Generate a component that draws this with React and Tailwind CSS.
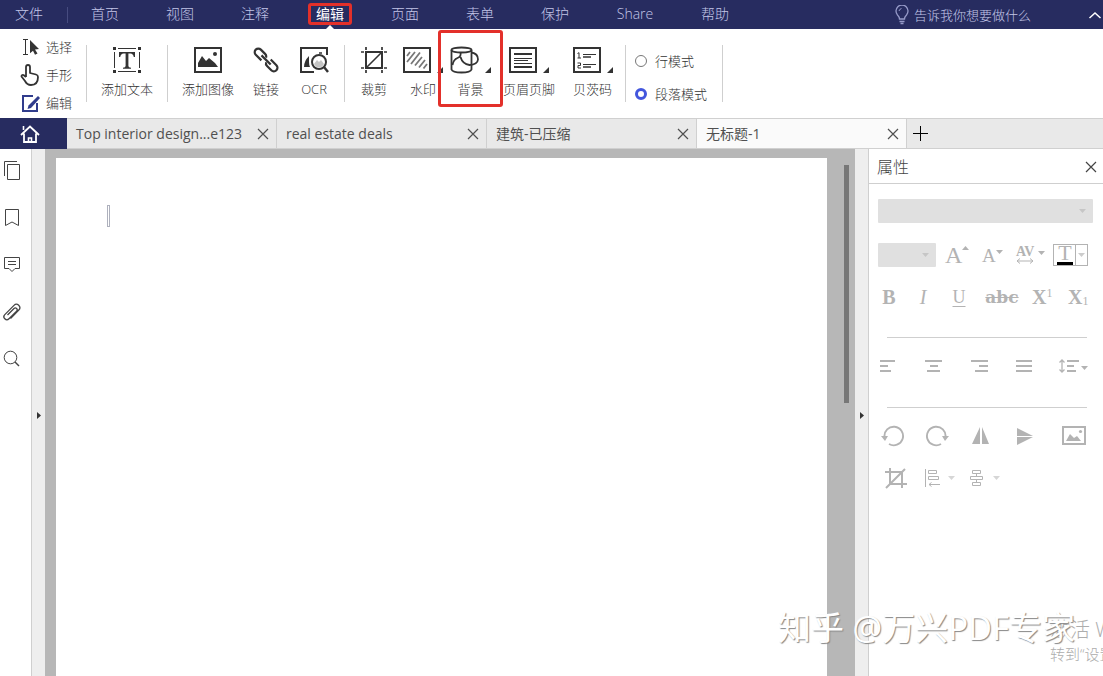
import React, { useState } from 'react';

const Svg = ({ w, h, children, className = '' }) => (
  <svg width={w} height={h} viewBox={`0 0 ${w} ${h}`} fill="none" stroke="currentColor" className={`shrink-0 ${className}`} aria-hidden="true">
    {children}
  </svg>
);

const CloseIcon = () => (
  <Svg w={12} h={12}><path d="M1 1l10 10M11 1L1 11" strokeWidth="1.200" /></Svg>
);

const Caret = ({ className = '' }) => (
  <Svg w={7} h={4} className={className}><path d="M0 0h7L3.500 4z" fill="currentColor" stroke="none" /></Svg>
);

const mountains = 'M4 21v-4l4-7 4 5 3-3 6 5 3 4z';

const toolIcons = {
  text: (
    <Svg w={28} h={28}>
      <path d="M0 1h3v3H0zM25 1h3v3h-3zM0 24h3v3H0zM25 24h3v3h-3z" fill="currentColor" stroke="none" />
      <path d="M5 2.500h18M5 25.500h18M1.500 6v16M26.500 6v16" strokeWidth="1" />
      <path d="M6 6h16v5h-1.200q-.6-3.500-3.400-3.500h-2V20q0 1.500 2.600 1.700v1h-8v-1q2.600-.2 2.600-1.700V7.500h-2q-2.800 0-3.400 3.500H6z" fill="currentColor" stroke="none" />
    </Svg>
  ),
  image: (
    <Svg w={28} h={28}>
      <rect x="1" y="2" width="26" height="24" strokeWidth="2" />
      <path d={mountains} fill="currentColor" stroke="none" />
      <circle cx="21" cy="8" r="2" fill="currentColor" stroke="none" />
    </Svg>
  ),
  link: (
    <Svg w={28} h={28}>
      <g transform="rotate(45 14 14)" strokeWidth="2.200">
        <path d="M11 17.500H3a3.600 3.600 0 0 1-3.600-3.600A3.600 3.600 0 0 1 3 10.300h6a3.600 3.600 0 0 1 3.300 2" />
        <path d="M17 10.300h8a3.600 3.600 0 0 1 3.600 3.600 3.600 3.600 0 0 1-3.600 3.600h-6a3.600 3.600 0 0 1-3.300-2" />
        <path d="M7.500 13.900h13" strokeWidth="2.300" />
      </g>
    </Svg>
  ),
  ocr: (
    <Svg w={29} h={28}>
      <path d="M27 9V2H1v24h13" strokeWidth="2" />
      <path d="M4 21q0-6 5-11v6q0 3 1 5z" fill="currentColor" stroke="none" />
      <circle cx="19" cy="16" r="7" strokeWidth="2" fill="#fff" />
      <path d="M14 18l3-4 2 2 2-2 3 4q-2 3.500-5 3.500t-5-3.500z" fill="#c4c4c4" stroke="none" />
      <path d="M24 21l4 5" strokeWidth="2.400" />
      <path d="M19 7h3" strokeWidth="1.500" />
    </Svg>
  ),
  crop: (
    <Svg w={28} h={28}>
      <rect x="6" y="6" width="16" height="16" strokeWidth="2" />
      <path d="M1 6h3M24 6h3M1 22h3M24 22h3M6 1v3M22 1v3M6 24v3M22 24v3" strokeWidth="1.700" />
      <path d="M6 22L22 6" strokeWidth="1.600" />
    </Svg>
  ),
  watermark: (
    <Svg w={28} h={28}>
      <rect x="1" y="2" width="26" height="24" strokeWidth="2" />
      <g stroke="#777" strokeWidth="1.800">
        <path d="M4 10l3-4M4 16l8-10M8 18L17 6.500M12 19.500L19 11M16 21.500L22 14M20.500 22.500L24 18" />
      </g>
    </Svg>
  ),
  background: (
    <Svg w={29} h={28}>
      <g strokeWidth="1.800">
        <ellipse cx="11.500" cy="4" rx="10" ry="2.500" />
        <path d="M1.500 4v19.500q1 3 10 3t10-3V4" />
        <path d="M10.500 6.500q1 4-3 5.500t-5 7" />
        <path d="M10.500 11q2 7 9 8 8-.5 8.500-5.500 0-6-6.500-7" />
      </g>
    </Svg>
  ),
  header: (
    <Svg w={28} h={28}>
      <rect x="1" y="2" width="26" height="24" strokeWidth="2" />
      <path d="M5 8h18M5 21h18" strokeWidth="2" />
      <path d="M5 12.500h18M5 14.500h14M5 17.500h18" strokeWidth="1" />
    </Svg>
  ),
  bates: (
    <Svg w={28} h={28}>
      <rect x="1" y="2" width="26" height="24" strokeWidth="2" />
      <path d="M10 8.500h13M10 18.500h13" strokeWidth="1" />
      <path d="M10 11h8M10 21h8" strokeWidth="1.600" />
      <path d="M4.500 7.500l1.500-.8V12M4.500 12h3.500M4.500 17h3v2.500H5V22h3" strokeWidth="1" />
    </Svg>
  ),
};

function Tool({ icon, label, width, menu, marked }) {
  return (
    <button type="button" className={`relative flex shrink-0 flex-col items-center gap-[7px] pt-[17px] ${width}`}>
      {marked && <span className="absolute -inset-x-[5px] top-px z-10 h-[77px] rounded-[3px] border-3 border-[#e3302a]" />}
      <span className="flex items-end gap-[6px]">
        {toolIcons[icon]}
        {menu && <Svg w={6} h={6} className="mb-px"><path d="M6 0v6H0z" fill="currentColor" stroke="none" /></Svg>}
      </span>
      <span className="text-[13px] leading-4 whitespace-nowrap">{label}</span>
    </button>
  );
}

const Divider = () => <span className="mt-4 h-[57px] w-px shrink-0 bg-[#cfcfcf]" />;

const menus = ['首页', '视图', '注释', '编辑', '页面', '表单', '保护', 'Share', '帮助'];

function MenuBar() {
  return (
    <nav className="flex h-[29px] shrink-0 items-stretch bg-[#272c60] text-[14px] leading-5 font-light text-[#c3c6e8]">
      <button type="button" className="w-[58px] shrink-0 pb-px">文件</button>
      <span className="ml-[9px] h-4 w-px shrink-0 self-center bg-[#474c80]" />
      {menus.map((m) => (
        <button key={m} type="button" className={`relative flex shrink-0 items-center justify-center pr-px pb-px ${m === 'Share' ? 'w-[85px]' : 'w-[75px]'}`}>
          {m === '编辑' ? (
            <>
              <span className="flex h-[22px] w-11 shrink-0 items-center justify-center rounded-[3px] border-3 border-[#e3302a] font-normal text-white">{m}</span>
              <Svg w={8} h={4} className="absolute bottom-0 text-white"><path d="M0 4l4-4 4 4z" fill="currentColor" stroke="none" /></Svg>
            </>
          ) : m}
        </button>
      ))}
      <div className="ml-auto flex items-center">
        <button type="button" className="flex items-center gap-1 pt-px text-[13px]">
          <Svg w={16} h={20} className="-mt-px">
            <path d="M5.500 14q0-2-2-4a6 6 0 1 1 9 0q-2 2-2 4zM5.500 16.500h5M6.500 18.500h3" stroke="#969ac8" strokeWidth="1.300" />
            <path d="M5 6q.5-2 2.500-2.500" stroke="#969ac8" />
          </Svg>
          告诉我你想要做什么
        </button>
        <button type="button" aria-label="收起" className="ml-14 text-white">
          <Svg w={16} h={12}><path d="M2.500 9L8 4l5.500 5" strokeWidth="1.500" /></Svg>
        </button>
      </div>
    </nav>
  );
}

function Ribbon() {
  const [mode, setMode] = useState('para');
  const mini = 'flex h-7 items-center gap-[6px]';
  return (
    <div className="flex h-[89px] shrink-0 items-start bg-white font-light text-[#333]">
      <div className="flex w-[86px] shrink-0 flex-col pt-1 pl-5 text-[13px] leading-4">
        <button type="button" className={mini}>
          <Svg w={20} h={20}>
            <path d="M3 2.500h5M5.500 2.500v15M3 17.500h5" strokeWidth="1" />
            <path d="M10 3l9 9-4 .5 2.500 4-2.500 1.200-2-4-3 2.500z" fill="currentColor" stroke="none" />
          </Svg>
          选择
        </button>
        <button type="button" className={mini}>
          <Svg w={20} h={24}>
            <path d="M6 14V4q0-2 2-2t2 2v6l6 1.500q2 .5 2 2.500 0 8-7 8-4 0-6-4l-3.500-4.500q0-2 2-1.500L6 14" strokeWidth="1.800" strokeLinejoin="round" />
          </Svg>
          手形
        </button>
        <button type="button" className={mini}>
          <Svg w={20} h={20} className="text-[#303c8c]">
            <path d="M13 3H3v15h14v-8" strokeWidth="2" />
            <path d="M18 3l2 2-9 10-3.500 1L8.500 12.500z" fill="currentColor" stroke="none" />
          </Svg>
          编辑
        </button>
      </div>
      <Divider />
      <Tool icon="text" label="添加文本" width="w-20" />
      <Divider />
      <Tool icon="image" label="添加图像" width="w-20" />
      <Tool icon="link" label="链接" width="w-9" />
      <Tool icon="ocr" label="OCR" width="w-[60px]" />
      <Divider />
      <Tool icon="crop" label="裁剪" width="w-[58px]" />
      <Tool icon="watermark" label="水印" width="w-10" menu />
      <Tool icon="background" label="背景" width="w-[55px]" menu marked />
      <Tool icon="header" label="页眉页脚" width="w-[62px]" menu />
      <Tool icon="bates" label="贝茨码" width="w-[65px]" menu />
      <Divider />
      <div className="flex w-24 shrink-0 flex-col gap-[13px] pt-[22px] pl-[9px] text-[13px] leading-5">
        {[['line', '行模式'], ['para', '段落模式']].map(([id, label]) => (
          <label key={id} className="flex items-center gap-2">
            <input
              type="radio"
              name="mode"
              checked={mode === id}
              onChange={() => setMode(id)}
              className="size-3 appearance-none rounded-full border border-[#777] checked:border-3 checked:border-[#4356dd]"
            />
            {label}
          </label>
        ))}
      </div>
      <Divider />
    </div>
  );
}

const tabs = ['Top interior design...e123', 'real estate deals', '建筑-已压缩', '无标题-1'];

function TabBar() {
  return (
    <div className="flex h-[31px] shrink-0 bg-[#e9e9e9] text-[#505050]">
      <button type="button" aria-label="主页" className="flex w-[67px] shrink-0 items-center justify-center bg-[#272c60] pr-2 text-white">
        <Svg w={20} h={20}>
          <path d="M1 11L10 2.500l9 8.500M4 9.500V18h12V9.500" strokeWidth="1.800" />
          <path d="M8.500 18v-4h3v4M3.500 2v4" strokeWidth="1.600" />
        </Svg>
      </button>
      <div className="flex flex-1 border-y border-[#d0d0d0]">
        {tabs.map((t, i) => (
          <div key={t} className={`flex w-[210px] items-center justify-between border-r border-[#d0d0d0] pr-[7px] pl-[9px] ${i === 3 ? 'bg-[#fafafa]' : ''}`}>
            <button type="button" className="text-[14px] leading-5 whitespace-nowrap">{t}</button>
            <button type="button" aria-label="关闭标签"><CloseIcon /></button>
          </div>
        ))}
        <button type="button" aria-label="新建标签" className="pl-[6px] text-black">
          <Svg w={15} h={15}><path d="M7.500 0v15M0 7.500h15" strokeWidth="1" /></Svg>
        </button>
      </div>
    </div>
  );
}

function SideRail() {
  return (
    <aside className="flex w-8 shrink-0 flex-col items-start gap-[27px] border-r border-[#cfcfcf] bg-white pt-3 pl-[2px] text-[#444]">
      <button type="button" aria-label="页面缩略图">
        <Svg w={20} h={20}><path d="M2.500 15V.5H15M5.500 3.500h12v15h-12z" strokeWidth="1" /></Svg>
      </button>
      <button type="button" aria-label="书签">
        <Svg w={20} h={20}><path d="M3.500 1.500h13v16L10 14l-6.500 3.500z" strokeWidth="1" /></Svg>
      </button>
      <button type="button" aria-label="注释">
        <Svg w={20} h={20}><path d="M2.500 2.500h15v11H13l-3 3-3-3H2.500zM6 6.500h8M6 9.500h8" strokeWidth="1" /></Svg>
      </button>
      <button type="button" aria-label="附件">
        <Svg w={20} h={20}>
          <path d="M5.500 12l6.500-6.500a1.800 1.800 0 0 1 2.600 2.600L7 15.800a2.900 2.900 0 0 1-4.200-4.200L12 2.400a3.300 3.300 0 0 1 4.800 4.600L8.500 15.500" strokeWidth="1.300" transform="translate(0 1)" />
        </Svg>
      </button>
      <button type="button" aria-label="搜索">
        <Svg w={20} h={20}><circle cx="8.500" cy="8.500" r="6.300" strokeWidth="1" /><path d="M13 13l4 4" strokeWidth="1.500" /></Svg>
      </button>
    </aside>
  );
}

const Grip = ({ label }) => (
  <button type="button" aria-label={label} className="flex w-[13px] shrink-0 items-center justify-center bg-[#eee] pt-[6px] text-[#333]">
    <Svg w={4} h={7}><path d="M0 0l4 3.500L0 7z" fill="currentColor" stroke="none" /></Svg>
  </button>
);

const serif = "font-['Liberation_Serif',serif]";

function Select({ label, className }) {
  return (
    <div className={`relative h-6 ${className}`}>
      <select disabled aria-label={label} className="h-6 w-full appearance-none rounded-[1px] bg-[#e0e0e0]" />
      <Caret className="absolute top-[10px] right-[7px] text-[#c6c6c6]" />
    </div>
  );
}

function AlignIcon({ lines }) {
  return <Svg w={18} h={14}><path d={lines} strokeWidth="2" /></Svg>;
}

function Properties() {
  return (
    <aside className="flex w-[235px] shrink-0 flex-col border-l border-[#cfcfcf] bg-white text-[#b3b3b3]">
      <header className="flex h-[35px] items-center justify-between border-b border-[#cfcfcf] pt-px pr-[6px] pl-2 text-[#444]">
        <h2 className="text-[16px] leading-6 font-light">属性</h2>
        <button type="button" aria-label="关闭属性"><CloseIcon /></button>
      </header>
      <div className="flex flex-col pt-[15px] pl-[9px]">
        <Select label="字体" className="mr-[10px]" />
        <div className="mt-5 flex h-6 items-center">
          <Select label="字号" className="w-[58px]" />
          <button type="button" aria-label="增大字号" className={`ml-[9px] flex w-[26px] items-start text-[24px] leading-6 ${serif}`}>
            A<Caret className="mt-[3px] rotate-180" />
          </button>
          <button type="button" aria-label="减小字号" className={`ml-[11px] flex w-5 items-start pt-px text-[19px] leading-5 ${serif}`}>
            A<Caret className="mt-1" />
          </button>
          <button type="button" aria-label="字符间距" className={`ml-[14px] flex items-center gap-1 text-[14px] leading-3 ${serif} font-bold`}>
            <span className="flex flex-col items-center">
              AV
              <Svg w={18} h={6}><path d="M1 3h16M4 .5L1 3l3 2.500M14 .5L17 3l-3 2.500" /></Svg>
            </span>
            <Caret className="-mt-1" />
          </button>
          <button type="button" aria-label="文字颜色" className="ml-2 flex h-[22px] w-[35px] border border-[#b3b3b3]">
            <span className={`flex w-[22px] flex-col items-center gap-px border-r border-[#b3b3b3] text-[22px] leading-4 ${serif}`}>
              T<span className="h-[3px] w-4 bg-black" />
            </span>
            <span className="flex flex-1 items-center justify-center self-stretch text-[#ccc]"><Caret /></span>
          </button>
        </div>
        <div className={`mt-[18px] flex h-6 items-center text-[20px] leading-6 ${serif}`}>
          <button type="button" aria-label="加粗" className="w-[22px] font-bold">B</button>
          <button type="button" aria-label="斜体" className="w-[46px] italic">I</button>
          <button type="button" aria-label="下划线" className="w-[26px] text-[18px] underline underline-offset-3">U</button>
          <button type="button" aria-label="删除线" className="w-[60px] font-['DejaVu_Serif',serif] text-[17px] font-bold line-through">abc</button>
          <button type="button" aria-label="上标" className="flex w-[36px] font-bold">X<span className="text-[12px] leading-4 font-normal">1</span></button>
          <button type="button" aria-label="下标" className="flex font-bold">X<span className="self-end text-[12px] leading-4 font-normal">1</span></button>
        </div>
        <hr className="mt-7 mr-4 ml-[9px] border-[#cfcfcf]" />
        <div className="mt-5 flex h-4 items-center gap-7">
          <button type="button" aria-label="左对齐"><AlignIcon lines="M2 2h15M2 7h8M2 12h11" /></button>
          <button type="button" aria-label="居中对齐"><AlignIcon lines="M1 2h17M6 7h8M3 12h13" /></button>
          <button type="button" aria-label="右对齐"><AlignIcon lines="M1 2h17M9 7h9M5 12h13" /></button>
          <button type="button" aria-label="两端对齐"><AlignIcon lines="M0 2h16M0 7h16M0 12h16" /></button>
          <button type="button" aria-label="行距" className="-ml-1">
            <Svg w={30} h={16}>
              <path d="M4 2v12M1.500 4.500L4 2l2.500 2.500M1.500 11.500L4 14l2.500-2.500" strokeWidth="1.300" />
              <path d="M9 3h12M9 8h7M9 13h9" strokeWidth="1.800" />
              <path d="M23 8h7l-3.500 4z" fill="currentColor" stroke="none" />
            </Svg>
          </button>
        </div>
        <hr className="mt-[33px] mr-4 ml-[9px] border-[#cfcfcf]" />
        <div className="mt-4 flex h-6 items-center gap-5 pl-[3px]">
          <button type="button" aria-label="向左旋转">
            <Svg w={24} h={24}><path d="M3.500 13A9.300 9.300 0 1 1 8 20" strokeWidth="1.900" /><path d="M0 12h7l-3 5z" fill="currentColor" stroke="none" /></Svg>
          </button>
          <button type="button" aria-label="向右旋转">
            <Svg w={24} h={24}><path d="M20.500 13A9.300 9.300 0 1 0 16 20" strokeWidth="1.900" /><path d="M17 12h7l-4 5z" fill="currentColor" stroke="none" /></Svg>
          </button>
          <button type="button" aria-label="水平翻转">
            <Svg w={24} h={24}><path d="M11 3v17H3zM13 3v17h7z" fill="currentColor" stroke="none" /></Svg>
          </button>
          <button type="button" aria-label="垂直翻转">
            <Svg w={24} h={24}><path d="M4 4l16 8H4zM4 13h16L4 21z" fill="currentColor" stroke="none" /></Svg>
          </button>
          <button type="button" aria-label="替换图像" className="pl-[5px]">
            <Svg w={24} h={24}>
              <rect x="1" y="3" width="22" height="17" strokeWidth="2" />
              <path d="M4 17l4-7 4 4 3-2 4 5z" fill="currentColor" stroke="none" />
              <circle cx="18.500" cy="7.500" r="1.600" fill="currentColor" stroke="none" />
            </Svg>
          </button>
        </div>
        <div className="mt-[18px] flex h-6 items-center pl-[6px]">
          <button type="button" aria-label="裁剪图像">
            <Svg w={24} h={24}><path d="M1 6h17v16M6 2v16h17M2 22L21 3" strokeWidth="2" /></Svg>
          </button>
          <button type="button" aria-label="对齐对象" className="ml-4 flex items-center gap-[7px]">
            <Svg w={17} h={20}><path d="M1.500 1v18M4.500 2.500h8v3h-8zM4.500 8.500h10v3h-10zM5 16.500h11M7.500 14.500l-2.500 2 2.500 2" strokeWidth="1" /></Svg>
            <Caret className="text-[#d6d6d6]" />
          </button>
          <button type="button" aria-label="分布对象" className="ml-[14px] flex items-center gap-[7px]">
            <Svg w={17} h={20}><path d="M3.500 2.500h8v3h-8zM1.500 8.500h12v3h-12zM3.500 14.500h8v3h-8zM7.500 6v2M7.500 12v2" strokeWidth="1" /></Svg>
            <Caret className="text-[#d6d6d6]" />
          </button>
        </div>
      </div>
    </aside>
  );
}

export default function App() {
  return (
    <div className="relative flex h-screen flex-col overflow-hidden bg-white font-['Open_Sans','Noto_Sans_CJK_SC',sans-serif]">
      <MenuBar />
      <Ribbon />
      <TabBar />
      <div className="flex min-h-0 flex-1">
        <SideRail />
        <Grip label="展开侧栏" />
        <main className="flex min-w-0 flex-1 bg-[#b7b7b7] pl-[11px]">
          <div className="mt-[9px] flex-1 bg-white pt-[47px] pl-[51px]">
            <div className="h-[22px] w-[3px] border border-[#aeb1bd]" />
          </div>
          <div className="w-7 shrink-0 pt-4 pl-[17px]">
            <div className="h-[238px] w-[5px] bg-[#777]" />
          </div>
        </main>
        <Grip label="收起属性" />
        <Properties />
      </div>
      <div className="pointer-events-none absolute right-0 bottom-[10px] w-[53px] overflow-hidden whitespace-nowrap text-[#adadad]">
        <p className="text-[20px] leading-6 font-light">激活 W</p>
        <p className="text-[15px] leading-6 font-light">转到“设置”</p>
      </div>
      <p className="pointer-events-none absolute right-7 bottom-7 text-[33px] leading-10 whitespace-nowrap text-white [text-shadow:1px_1px_1px_#888]">
        知乎 @万兴PDF专家
      </p>
    </div>
  );
}
